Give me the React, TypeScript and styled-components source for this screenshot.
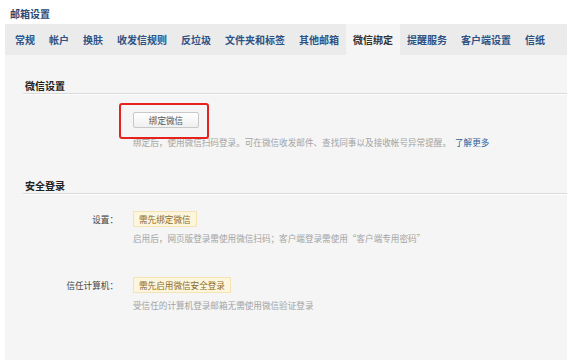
import { createGlobalStyle, styled } from 'styled-components';

const GlobalStyle = createGlobalStyle`
  html, body {
    margin: 0;
    padding: 0;
    background: #fff;
  }

  body {
    font-family: "Noto Sans CJK SC", "Noto Sans", sans-serif;
    color: #333;
  }
`;

const Page = styled.div`
  display: flex;
  flex-direction: column;
  height: 360px;
  overflow: hidden;
`;

const Title = styled.h1`
  margin: 0;
  padding: 7px 0 0 10px;
  height: 17px;
  font-size: 10px;
  line-height: 14px;
  font-weight: 700;
  color: #2a4873;
`;

const TabBar = styled.nav`
  display: flex;
  height: 31px;
  margin-left: 5px;
  padding-left: 3px;
  background: #ebebeb;
`;

const Tab = styled.div<{ $active?: boolean }>`
  padding: 0 7px;
  line-height: 31px;
  font-size: 10px;
  font-weight: 700;
  white-space: nowrap;
  color: ${(p) => (p.$active ? '#333' : '#2e5283')};
  background: ${(p) => (p.$active ? '#f5f5f5' : 'transparent')};
`;

const Content = styled.main`
  flex: 1;
  margin-left: 5px;
  padding-left: 18px;
  background: #f5f5f5;
`;

const SectionHeader = styled.h2`
  margin: 0;
  padding: 0 0 0 2px;
  font-size: 10px;
  line-height: 14px;
  font-weight: 700;
  color: #222;
  border-bottom: 1px solid #d9d9d9;
  box-shadow: 0 1px 0 #fff;
`;

const Section = styled.section<{ $top: number }>`
  padding-top: ${(p) => p.$top}px;
`;

const Row = styled.div<{ $top: number }>`
  display: grid;
  grid-template-columns: 95px 1fr;
  column-gap: 15px;
  margin-top: ${(p) => p.$top}px;
`;

const Label = styled.div`
  text-align: right;
  font-size: 8.6px;
  line-height: 16px;
  color: #444;
`;

const Field = styled.div`
  display: flex;
  flex-direction: column;
  align-items: flex-start;
`;

const ButtonWrap = styled.div`
  position: relative;
`;

const Button = styled.button`
  display: block;
  width: 66px;
  height: 16px;
  padding: 0;
  border: 1px solid #c9c9c9;
  border-radius: 2px;
  background: linear-gradient(#fff, #f0f0f0);
  font-family: inherit;
  font-size: 8.6px;
  line-height: 14px;
  color: #555;
`;

const Highlight = styled.div`
  position: absolute;
  left: -14px;
  top: -9px;
  width: 86px;
  height: 32px;
  border: 2px solid #e5221d;
  border-radius: 3px;
  pointer-events: none;
`;

const Badge = styled.span`
  display: block;
  height: 14px;
  padding: 0 5px;
  border: 1px solid #f3e3b5;
  background: #fdf6dd;
  font-size: 8.6px;
  line-height: 14px;
  color: #8b6a2f;
  white-space: nowrap;
`;

const Hint = styled.p<{ $top: number }>`
  margin: ${(p) => p.$top}px 0 0;
  font-size: 8.6px;
  line-height: 12px;
  color: #a3a3a3;
  white-space: nowrap;
`;

const MoreLink = styled.a`
  margin-left: 4px;
  color: #2d5b98;
  text-decoration: none;
`;

const tabs = ['常规', '帐户', '换肤', '收发信规则', '反垃圾', '文件夹和标签', '其他邮箱', '微信绑定', '提醒服务', '客户端设置', '信纸'];

export default function App() {
  return (
    <>
      <GlobalStyle />
      <Page>
        <Title>邮箱设置</Title>
        <TabBar>
          {tabs.map((t) => (
            <Tab key={t} $active={t === '微信绑定'}>
              {t}
            </Tab>
          ))}
        </TabBar>
        <Content>
          <Section $top={24}>
            <SectionHeader>微信设置</SectionHeader>
            <Row $top={18}>
              <Label />
              <Field>
                <ButtonWrap>
                  <Button>绑定微信</Button>
                  <Highlight />
                </ButtonWrap>
                <Hint $top={8}>
                  绑定后，使用微信扫码登录。可在微信收发邮件、查找同事以及接收帐号异常提醒。
                  <MoreLink href="#">了解更多</MoreLink>
                </Hint>
              </Field>
            </Row>
          </Section>
          <Section $top={31}>
            <SectionHeader>安全登录</SectionHeader>
            <Row $top={17}>
              <Label>设置：</Label>
              <Field>
                <Badge>需先绑定微信</Badge>
                <Hint $top={5}>启用后，网页版登录需使用微信扫码；客户端登录需使用“客户端专用密码”</Hint>
              </Field>
            </Row>
            <Row $top={33}>
              <Label>信任计算机：</Label>
              <Field>
                <Badge>需先启用微信安全登录</Badge>
                <Hint $top={6}>受信任的计算机登录邮箱无需使用微信验证登录</Hint>
              </Field>
            </Row>
          </Section>
        </Content>
      </Page>
    </>
  );
}
